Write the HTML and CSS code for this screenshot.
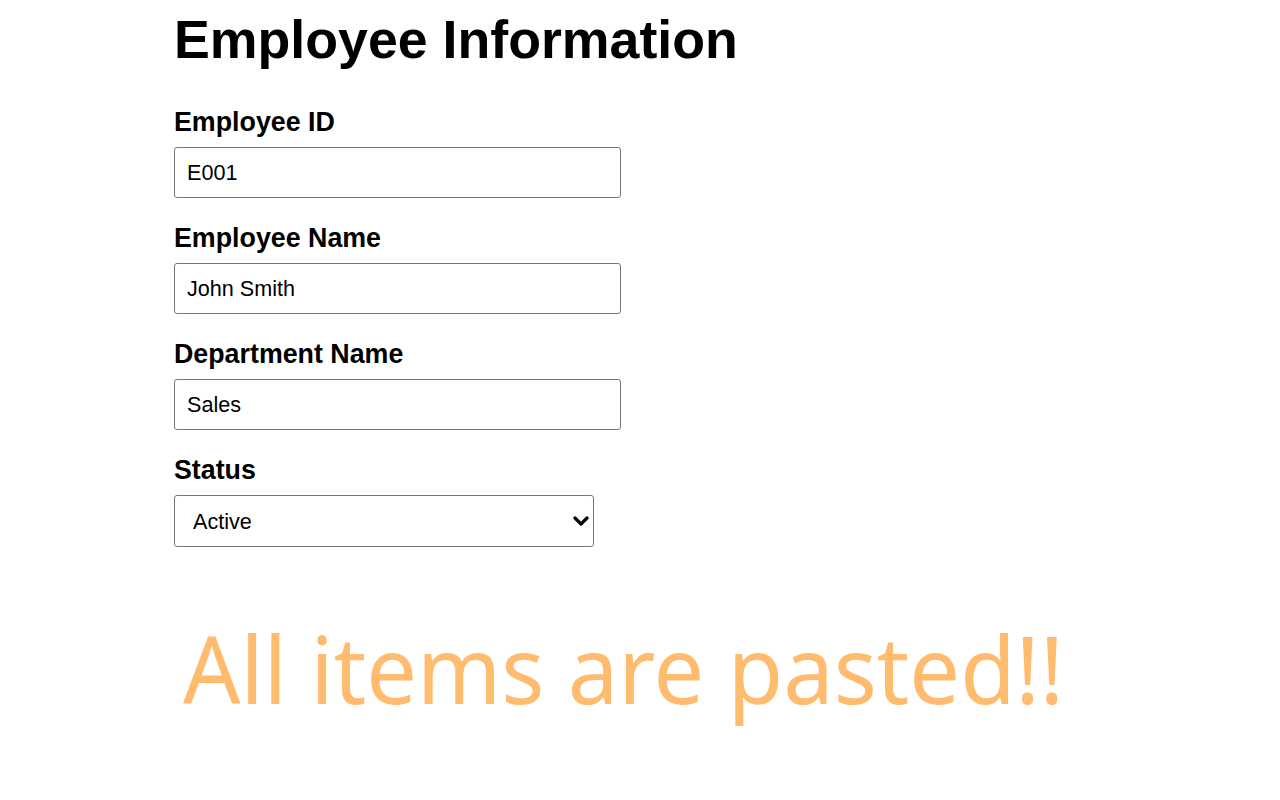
FILE: index.html
```html
<!DOCTYPE html>
<html lang="en">
<head>
<meta charset="utf-8">
<title>Employee Information</title>
<link rel="stylesheet" href="styles.css">
</head>
<body>
<main class="page">
  <h1 class="title">Employee Information</h1>
  <form class="form">
    <div class="field">
      <label class="label" for="eid">Employee ID</label>
      <input class="input" id="eid" type="text" value="E001">
    </div>
    <div class="field">
      <label class="label" for="ename">Employee Name</label>
      <input class="input" id="ename" type="text" value="John Smith">
    </div>
    <div class="field">
      <label class="label" for="dept">Department Name</label>
      <input class="input" id="dept" type="text" value="Sales">
    </div>
    <div class="field">
      <label class="label" for="status">Status</label>
      <div class="select-wrap">
        <select class="select" id="status">
          <option>Active</option>
          <option>Inactive</option>
        </select>
        <svg class="chevron" width="16" height="10" viewBox="0 0 16 10" aria-hidden="true">
          <path d="M2 2 L8 8 L14 2" fill="none" stroke="#000" stroke-width="3.2" stroke-linecap="round" stroke-linejoin="round"/>
        </svg>
      </div>
    </div>
  </form>
  <p class="message">All items are pasted!!</p>
</main>
</body>
</html>
```

FILE: styles.css
```css
html, body {
  margin: 0;
  padding: 0;
  background: #ffffff;
}

.page {
  padding-left: 174px;
  font-family: "Liberation Sans", Arial, sans-serif;
  color: #000;
}

.title {
  margin: 8px 0 0 0;
  font-size: 53.7px;
  font-weight: bold;
  line-height: 62px;
}

.form {
  display: flex;
  flex-direction: column;
  gap: 25px;
  margin-top: 37px;
}

.field {
  display: flex;
  flex-direction: column;
  align-items: flex-start;
  gap: 9px;
}

.label {
  font-size: 26.8px;
  font-weight: bold;
  line-height: 31px;
}

.input,
.select {
  box-sizing: border-box;
  height: 51px;
  border: 1px solid #767676;
  border-radius: 3px;
  font-family: "Liberation Sans", Arial, sans-serif;
  font-size: 21.6px;
  color: #000;
  background: #fff;
  margin: 0;
}

.input {
  width: 447px;
  padding: 0 12px;
}

.select-wrap {
  position: relative;
  width: 420px;
  height: 52px;
}

.select {
  -webkit-appearance: none;
  appearance: none;
  width: 420px;
  height: 52px;
  padding: 0 30px 0 18px;
}

.chevron {
  position: absolute;
  right: 5px;
  top: 21px;
  pointer-events: none;
}

.message {
  margin: 57px 0 0 9px;
  font-family: "Noto Sans", "Open Sans", sans-serif;
  font-size: 94px;
  color: #ffbb6e;
  line-height: 1.362;
  transform: scaleX(0.958);
  transform-origin: left top;
  white-space: nowrap;
}
```
